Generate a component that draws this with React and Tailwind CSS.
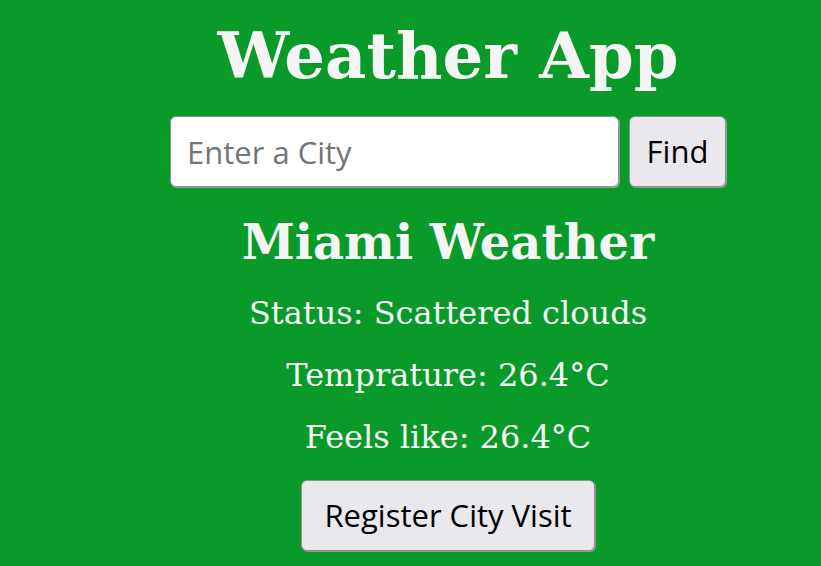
import React from 'react'

export default function App() {
  return (
    <div className="min-h-[566px] w-full bg-[#0a9a2a] text-[#f5f5f5] pl-[75px]" style={{ fontFamily: '"DejaVu Serif", serif' }}>
      <div className="flex flex-col items-center">
        <h1 className="mt-[16px] text-[64px] font-bold leading-[80px]">Weather App</h1>
        <div className="mt-[20px] flex gap-[10px]" style={{ fontFamily: '"Open Sans", sans-serif' }}>
          <input
            type="text"
            placeholder="Enter a City"
            className="h-[71px] w-[449px] rounded-[6px] border border-[#8f8f8f] bg-white px-[16px] text-[31px] text-black placeholder:text-[#757575] outline-none shadow-[1px_1px_0_#9a9a9a]"
          />
          <button className="h-[71px] w-[97px] rounded-[6px] border border-[#8f8f8f] bg-[#e9e8ed] text-[31px] text-black shadow-[1px_1px_0_#9a9a9a]">
            Find
          </button>
        </div>
        <h2 className="mt-[23px] text-[48px] font-bold leading-[64px]">Miami Weather</h2>
        <p className="mt-[19px] text-[32px] leading-[40px]">Status: Scattered clouds</p>
        <p className="mt-[22px] text-[32px] leading-[40px]">Temprature: 26.4°C</p>
        <p className="mt-[22px] text-[32px] leading-[40px]">Feels like: 26.4°C</p>
        <button
          className="mt-[23px] h-[71px] rounded-[6px] border border-[#8f8f8f] bg-[#e9e8ed] px-[22px] text-[31px] text-black shadow-[1px_1px_0_#9a9a9a]"
          style={{ fontFamily: '"Open Sans", sans-serif' }}
        >
          Register City Visit
        </button>
      </div>
    </div>
  )
}
